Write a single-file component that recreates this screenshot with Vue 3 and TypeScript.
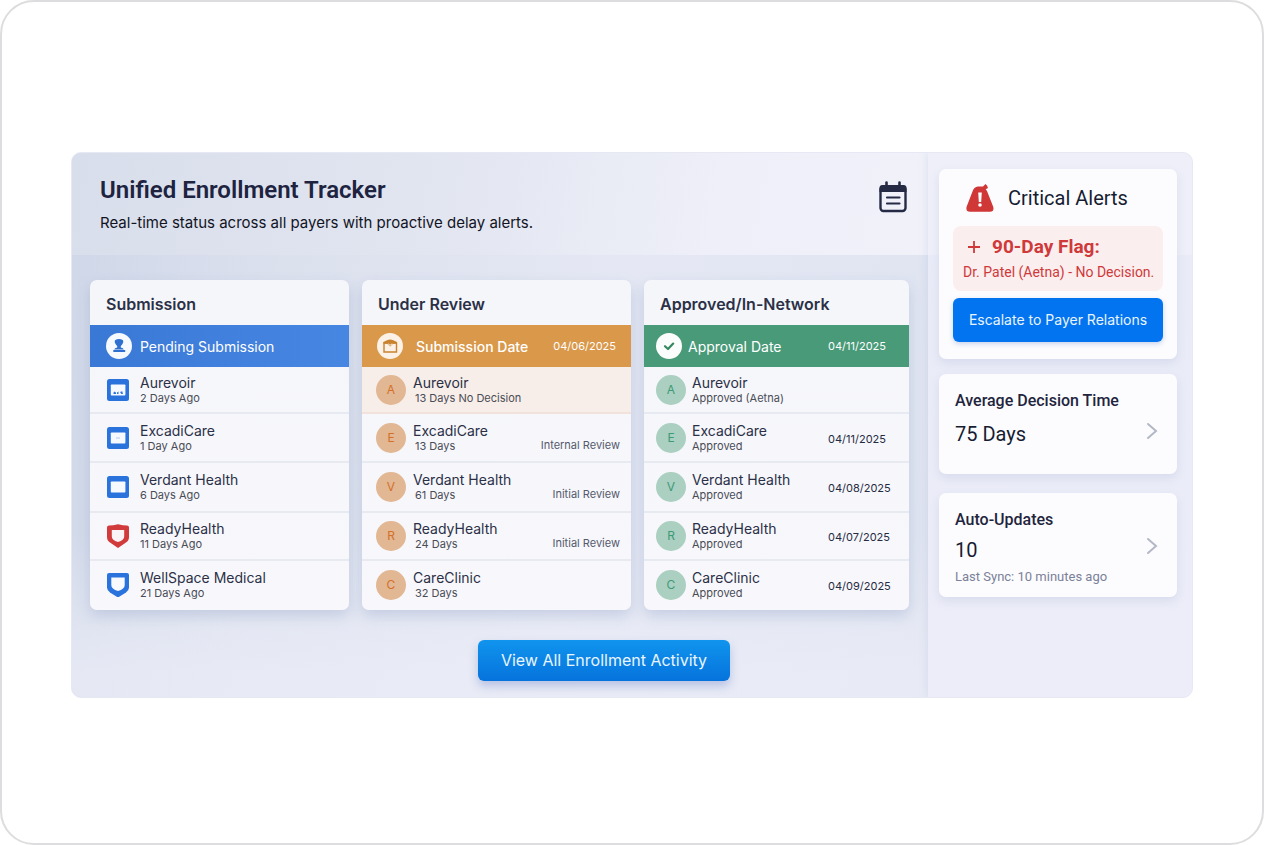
<script setup lang="ts">
type Glyph = 'photo' | 'card' | 'window' | 'shield-red' | 'shield-blue'

interface Entry {
  name: string
  detail: string
  glyph?: Glyph
  note?: string
  flagged?: boolean
}

interface Column {
  key: 'submission' | 'review' | 'approved'
  title: string
  band: string
  bandDate?: string
  entries: Entry[]
}

const columns: Column[] = [
  {
    key: 'submission',
    title: 'Submission',
    band: 'Pending Submission',
    entries: [
      { name: 'Aurevoir', detail: '2 Days Ago', glyph: 'photo' },
      { name: 'ExcadiCare', detail: '1 Day Ago', glyph: 'card' },
      { name: 'Verdant Health', detail: '6 Days Ago', glyph: 'window' },
      { name: 'ReadyHealth', detail: '11 Days Ago', glyph: 'shield-red' },
      { name: 'WellSpace Medical', detail: '21 Days Ago', glyph: 'shield-blue' },
    ],
  },
  {
    key: 'review',
    title: 'Under Review',
    band: 'Submission Date',
    bandDate: '04/06/2025',
    entries: [
      { name: 'Aurevoir', detail: '13 Days No Decision', flagged: true },
      { name: 'ExcadiCare', detail: '13 Days', note: 'Internal Review' },
      { name: 'Verdant Health', detail: '61 Days', note: 'Initial Review' },
      { name: 'ReadyHealth', detail: '24 Days', note: 'Initial Review' },
      { name: 'CareClinic', detail: '32 Days' },
    ],
  },
  {
    key: 'approved',
    title: 'Approved/In-Network',
    band: 'Approval Date',
    bandDate: '04/11/2025',
    entries: [
      { name: 'Aurevoir', detail: 'Approved (Aetna)' },
      { name: 'ExcadiCare', detail: 'Approved', note: '04/11/2025' },
      { name: 'Verdant Health', detail: 'Approved', note: '04/08/2025' },
      { name: 'ReadyHealth', detail: 'Approved', note: '04/07/2025' },
      { name: 'CareClinic', detail: 'Approved', note: '04/09/2025' },
    ],
  },
]
</script>

<template>
  <div class="frame">
    <div class="panel">
      <main class="main">
        <header class="header">
          <div>
            <h1>Unified Enrollment Tracker</h1>
            <p>Real-time status across all payers with proactive delay alerts.</p>
          </div>
          <button class="calendar" type="button" aria-label="Open calendar">
            <svg width="30" height="32" viewBox="0 0 30 32">
              <rect x="2.500" y="5.500" width="25" height="24.500" rx="3" fill="none" stroke="#252b45" stroke-width="2.400" />
              <path d="M1.500 11V7a3 3 0 0 1 3-3h21a3 3 0 0 1 3 3v4z" fill="#252b45" />
              <path d="M8.500 1.500v4M21.500 1.500v4" stroke="#252b45" stroke-width="2.600" stroke-linecap="round" />
              <path d="M9 16.500h12.500M9 22.500h12.500" stroke="#252b45" stroke-width="2.200" stroke-linecap="round" />
            </svg>
          </button>
        </header>

        <div class="board">
          <section v-for="col in columns" :key="col.key" class="column" :class="col.key">
            <h2>{{ col.title }}</h2>
            <div class="band">
              <svg v-if="col.key === 'submission'" class="badge" viewBox="0 0 26 26">
                <circle cx="13" cy="13" r="13" fill="#f6f9fd" />
                <path d="M9 7.200Q13 4.600 17 7.200Q17.800 8.800 16.600 10.800Q15.800 12.400 14.800 13v1.500q2.600 .4 3 2H8.200q.4-1.600 3-2V13Q10.200 12.400 9.400 10.800Q8.200 8.800 9 7.200z" fill="#2f6fd0" />
                <path d="M8 18h10.500" stroke="#2f6fd0" stroke-width="1.800" stroke-linecap="round" />
              </svg>
              <svg v-else-if="col.key === 'review'" class="badge" viewBox="0 0 26 26">
                <circle cx="13" cy="13" r="13" fill="#fbf1e6" />
                <path d="M7 10h12.500v9H7z" fill="none" stroke="#c9822f" stroke-width="1.400" />
                <path d="M6.300 10.500V9L10 7.200q3-1.600 6.300 0L20 9v1.500l-4 .3-2.800 2.800-2.900-2.800z" fill="#c9822f" />
                <path d="M11.200 10.800l1.800 1.500 2.200-1.500" fill="none" stroke="#fbf1e6" />
              </svg>
              <svg v-else class="badge" viewBox="0 0 26 26">
                <circle cx="13" cy="13" r="13" fill="#fbfdfc" />
                <path d="M9 13.200l3 2.800 5.200-5.400" fill="none" stroke="#35885f" stroke-width="2.200" stroke-linecap="round" stroke-linejoin="round" />
              </svg>
              <span class="band-label">{{ col.band }}</span>
              <time v-if="col.bandDate" class="stamp">{{ col.bandDate }}</time>
            </div>
            <ul>
              <li v-for="entry in col.entries" :key="entry.name" :class="{ flagged: entry.flagged }">
                <svg v-if="entry.glyph" class="glyph" viewBox="0 0 22 24">
                  <template v-if="entry.glyph === 'shield-red'">
                    <path d="M2 1.500Q6 1.500 11 .3q5 1.200 9 1.200 2 0 2 2V13q0 3.500-3 5.500l-8 5.500-8-5.500Q0 16.500 0 13V3.500q0-2 2-2z" fill="#d23b3b" />
                    <path d="M4.800 6h12.400v6.500q0 3.500-6.200 5.500-6.200-2-6.200-5.500z" fill="#fbf4f6" />
                  </template>
                  <template v-else-if="entry.glyph === 'shield-blue'">
                    <path d="M2 0h18q2 0 2 2v12.500q0 3-3 5L11 24.500 3 19.500q-3-2-3-5V2q0-2 2-2z" fill="#2b73dc" />
                    <path d="M4.300 4.500h13.400V12q0 4-6.700 6-6.700-2-6.700-6z" fill="#f7f9fd" />
                  </template>
                  <template v-else>
                    <rect y="1" width="22" height="22" rx="2.500" fill="#2b73dc" />
                    <rect x="3.800" y="6.500" width="14.600" height="11" rx=".8" fill="#f6f9fe" />
                    <path v-if="entry.glyph === 'photo'" d="M6.500 16v-1.500l1.300-1 1.200 1.200V16zM10 16v-1.600l1.500-.9V16zM13 14l2.200-.8.8 2.800h-1.600z" fill="#2b73dc" />
                    <path v-else-if="entry.glyph === 'card'" d="M9 12h4" stroke="#b5caec" />
                  </template>
                </svg>
                <span v-else class="avatar" aria-hidden="true">{{ entry.name.charAt(0) }}</span>
                <div class="who">
                  <strong>{{ entry.name }}</strong>
                  <small>{{ entry.detail }}</small>
                </div>
                <span v-if="entry.note" class="note">{{ entry.note }}</span>
              </li>
            </ul>
          </section>
        </div>

        <button class="view-all" type="button">View All Enrollment Activity</button>
      </main>

      <aside class="side">
        <section class="card alerts">
          <h2>
            <svg width="28" height="28" viewBox="0 0 28 28">
              <path d="M6.500 7.500Q7.800 3.200 12 2.600q3-.3 5-.1L19.500 0l1.500 1.600L22 4l-2.300 1.200q1.300 1.200 1.900 3.300l5.600 14.300Q28.500 27.700 24 27.800H4Q-.5 27.700.6 22.800z" fill="#d03737" />
              <path d="M12.200 8.500h3.600l-.6 9.500h-2.400z" fill="#fff" />
              <circle cx="14" cy="21" r="1.800" fill="#fff" />
            </svg>
            <span>Critical Alerts</span>
          </h2>
          <div class="flag">
            <h3>
              <svg width="14" height="14" viewBox="0 0 14 14"><path d="M7 1v12M1 7h12" stroke="#cf3939" stroke-width="1.800" /></svg>
              <span>90-Day Flag:</span>
            </h3>
            <p>Dr. Patel (Aetna) - No Decision.</p>
          </div>
          <button class="escalate" type="button">Escalate to Payer Relations</button>
        </section>

        <section class="card metric average">
          <div>
            <h3>Average Decision Time</h3>
            <p class="value">75 Days</p>
          </div>
          <button class="more" type="button" aria-label="Decision time details">
            <svg width="12" height="18" viewBox="0 0 12 18"><path d="M2 2l8 7-8 7" /></svg>
          </button>
        </section>

        <section class="card metric updates">
          <div>
            <h3>Auto-Updates</h3>
            <p class="value">10</p>
            <p class="sync">Last Sync: 10 minutes ago</p>
          </div>
          <button class="more" type="button" aria-label="Auto-update details">
            <svg width="12" height="18" viewBox="0 0 12 18"><path d="M2 2l8 7-8 7" /></svg>
          </button>
        </section>
      </aside>
    </div>
  </div>
</template>

<style>
body {
  background: #fff;
}
</style>

<style scoped>
* {
  box-sizing: border-box;
  margin: 0;
}

.frame {
  min-height: 100vh;
  padding: 150px 69px 0;
  border: 2px solid #dddddf;
  border-radius: 34px;
  font-family: Inter, "Liberation Sans", sans-serif;
  color: #262b42;
}

.panel {
  display: grid;
  grid-template-columns: minmax(0, 1fr) 264px;
  border: 1px solid #e6e9f4;
  border-radius: 10px;
  overflow: hidden;
  background: #e7e9f5;
}

.main {
  display: flex;
  flex-direction: column;
  padding-bottom: 16px;
  background:
    linear-gradient(rgba(235, 237, 247, 0) 70%, rgba(235, 237, 247, 0.75) 95%),
    linear-gradient(100deg, #cfd7e8 0%, #dce1ee 25%, #e5e8f4 60%, #dfe4f1 100%);
}

.header {
  display: flex;
  justify-content: space-between;
  align-items: flex-start;
  height: 102px;
  padding: 21px 20px 0 28px;
  background: linear-gradient(100deg, #d8deeb 0%, #e1e5f0 40%, #eeeff8 75%, #f0f1f9 100%);
}

.header h1 {
  font: 600 24px/32px Roboto, sans-serif;
  color: #1d2340;
}

.header p {
  margin-top: 7px;
  font-size: 15px;
  line-height: 20px;
  color: #12141f;
}

button {
  border: 0;
  padding: 0;
  background: none;
  font-family: inherit;
  cursor: pointer;
}

.calendar {
  margin-top: 7px;
}

svg {
  display: block;
  flex: none;
}

.board {
  display: grid;
  grid-template-columns: 259fr 269fr 265fr;
  gap: 13px;
  padding: 25px 19px 0 18px;
}

.column {
  border-radius: 7px;
  overflow: hidden;
  background: linear-gradient(#f5f6fa, #f8f8fc);
  box-shadow: 0 6px 14px rgba(130, 148, 190, 0.32);
}

.column h2 {
  padding: 3px 16px 0;
  font-size: 16px;
  font-weight: 600;
  line-height: 42px;
  color: #2b3047;
}

.band {
  display: flex;
  align-items: center;
  height: 42px;
  color: #fff;
}

.submission .band {
  padding-left: 16px;
  background: linear-gradient(90deg, #3a78d6, #4787e2);
}

.review .band {
  padding: 0 15px;
  background: #d9984a;
}

.approved .band {
  padding: 0 23px 0 12px;
  background: #489a78;
}

.badge {
  width: 26px;
  height: 26px;
}

.band-label {
  margin-left: 8px;
  font-size: 14px;
}

.approved .band-label {
  margin-left: 6px;
}

.review .band-label {
  margin-left: 13px;
  font-weight: 500;
}

.stamp {
  margin-left: auto;
  font-size: 11px;
}

ul {
  display: grid;
  grid-template-rows: 47px 49px 50px 48px 49px;
  padding: 0;
  list-style: none;
}

li {
  display: flex;
  align-items: center;
  border-bottom: 2px solid #e8eaf2;
}

li:last-child {
  border-bottom-color: transparent;
}

.submission li {
  gap: 11px;
  padding: 0 17px;
}

.review li {
  gap: 7px;
  padding: 0 11px 0 14px;
}

.approved li {
  gap: 6px;
  padding: 0 17px 0 12px;
}

.review .flagged {
  border-bottom-color: #f1e2dc;
  background: #f8eee9;
}

.glyph {
  width: 22px;
  height: 24px;
}

.avatar {
  flex: none;
  width: 30px;
  border-radius: 50%;
  font-size: 12px;
  line-height: 30px;
  text-align: center;
}

.review .avatar {
  background: #e2b793;
  color: #d3702a;
}

.approved .avatar {
  background: #abcfc0;
  color: #3d9a78;
}

.who {
  display: flex;
  flex-direction: column;
}

.who strong {
  font-size: 14px;
  font-weight: 400;
  line-height: 16px;
  color: #2b3047;
}

.who small {
  font-size: 11px;
  line-height: 14px;
  color: #4a4c56;
}

.review .who small {
  margin-left: 2px;
}

.note {
  margin-left: auto;
  font-size: 11px;
}

.review .note {
  padding-top: 14px;
  color: #555a6d;
}

.approved .note {
  width: 64px;
  padding-top: 2px;
  color: #262b42;
}

.view-all {
  align-self: center;
  width: 252px;
  margin: 30px 0 0 208px;
  border-radius: 6px;
  background: linear-gradient(#1094ee, #0673dc);
  box-shadow: 0 5px 10px rgba(100, 125, 200, 0.38);
  font-size: 16px;
  line-height: 41px;
  color: #e9f5ff;
}

.side {
  display: flex;
  flex-direction: column;
  padding: 16px 15px 16px 11px;
  background: linear-gradient(#eeeff8 0, #eeeff8 102px, #e9ebf7 102px, #ecedf8 100%);
  box-shadow: 0 0 8px rgba(150, 165, 205, 0.25);
}

.card {
  border-radius: 7px;
  background: #fcfcfe;
  box-shadow: 0 4px 10px rgba(140, 155, 195, 0.2);
}

.alerts {
  padding: 13px 14px 17px;
}

.alerts h2 {
  display: flex;
  align-items: center;
  gap: 14px;
  height: 32px;
  padding-left: 13px;
  font: 400 20px/32px Roboto, sans-serif;
  color: #171c33;
}

.flag {
  margin-top: 12px;
  padding: 8px 10px 7px;
  border-radius: 8px;
  background: #fbeeef;
  color: #cf3939;
}

.flag h3 {
  display: flex;
  align-items: center;
  gap: 11px;
  padding-left: 4px;
  font: 700 19px/26px Roboto, sans-serif;
}

.flag p {
  font: 400 14px/24px Roboto, sans-serif;
  white-space: nowrap;
}

.escalate {
  display: block;
  width: 100%;
  margin-top: 7px;
  border-radius: 6px;
  background: #0374f0;
  box-shadow: 0 2px 5px rgba(80, 120, 200, 0.3);
  font-size: 14px;
  line-height: 44px;
  color: #eaf4ff;
}

.metric {
  display: flex;
  justify-content: space-between;
  padding: 16px 19px 0 16px;
}

.average {
  height: 100px;
  margin-top: 15px;
}

.updates {
  height: 104px;
  margin-top: 19px;
}

.metric h3 {
  font: 500 16px/22px Roboto, sans-serif;
  color: #1f253d;
}

.value {
  margin-top: 8px;
  font: 400 20px/28px Roboto, sans-serif;
  color: #171c33;
}

.updates .value {
  margin-top: 5px;
}

.sync {
  font: 400 13px/26px Roboto, sans-serif;
  color: #7b8199;
}

.more {
  align-self: flex-start;
  margin-top: 32px;
}

.updates .more {
  margin-top: 28px;
}

.more path {
  fill: none;
  stroke: #b3b7c6;
  stroke-width: 2;
  stroke-linecap: round;
}
</style>
